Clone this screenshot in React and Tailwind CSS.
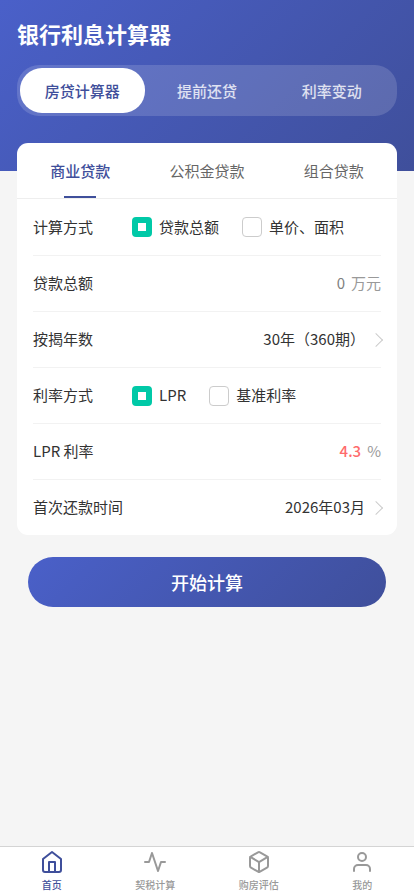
import React, { useState } from "react";
import { FiActivity, FiBox, FiHome, FiUser } from "react-icons/fi";

const modes = ["房贷计算器", "提前还贷", "利率变动"];
const loanTypes = ["商业贷款", "公积金贷款", "组合贷款"];
const months = ["2026年03月", "2026年04月", "2026年05月", "2026年06月"];
const years = [30, 25, 20, 15, 10, 5];

const navItems = [
  { label: "首页", icon: FiHome },
  { label: "契税计算", icon: FiActivity },
  { label: "购房评估", icon: FiBox },
  { label: "我的", icon: FiUser },
];

export default function App() {
  const [mode, setMode] = useState(modes[0]);
  const [loanType, setLoanType] = useState(loanTypes[0]);
  const [method, setMethod] = useState("贷款总额");
  const [rateType, setRateType] = useState("LPR");
  const [amount, setAmount] = useState("");
  const [rate, setRate] = useState("4.3");
  const [term, setTerm] = useState(30);
  const [month, setMonth] = useState(months[0]);

  return (
    <div className="flex min-h-screen flex-col bg-[#f5f5f5] font-['Noto_Sans_CJK_SC',sans-serif] text-[15px] text-[#333]">
      <header className="bg-linear-135 from-[#4a60c9] to-[#3f4f9b] px-[17px] pt-[17px] pb-[55px]">
        <h1 className="mb-4 text-[22px] leading-8 font-semibold text-white">银行利息计算器</h1>
        <div className="flex h-[51px] rounded-[22px] bg-white/15 p-[3px]">
          {modes.map((item) => (
            <button
              key={item}
              type="button"
              onClick={() => setMode(item)}
              className={
                item === mode
                  ? "flex-1 rounded-[22px] bg-white pt-[2px] font-medium text-[#3f4f9b]"
                  : "flex-1 rounded-[22px] pt-[2px] font-medium text-white/80"
              }
            >
              {item}
            </button>
          ))}
        </div>
      </header>

      <main className="-mt-7 flex-1 px-[17px]">
        <div className="rounded-[11px] bg-white">
          <div className="flex h-14 border-b border-[#eee]">
            {loanTypes.map((item) => (
              <button
                key={item}
                type="button"
                onClick={() => setLoanType(item)}
                className={
                  item === loanType
                    ? "relative flex-1 pt-[2px] font-medium text-[#3f4f9b] after:absolute after:bottom-0 after:left-1/2 after:h-[2px] after:w-8 after:-translate-x-1/2 after:bg-[#3f4f9b]"
                    : "flex-1 pt-[2px] text-[#666]"
                }
              >
                {item}
              </button>
            ))}
          </div>

          <div className="mx-4">
            <RadioRow
              label="计算方式"
              name="method"
              options={["贷款总额", "单价、面积"]}
              value={method}
              onChange={setMethod}
            />
            <InputRow
              id="amount"
              label="贷款总额"
              unit="万元"
              placeholder="0"
              value={amount}
              onChange={setAmount}
            />
            <SelectRow id="term" label="按揭年数" value={term} onChange={(v) => setTerm(Number(v))}>
              {years.map((y) => (
                <option key={y} value={y}>
                  {`${y}年（${y * 12}期）`}
                </option>
              ))}
            </SelectRow>
            <RadioRow
              label="利率方式"
              name="rateType"
              options={["LPR", "基准利率"]}
              value={rateType}
              onChange={setRateType}
            />
            <InputRow id="rate" label="LPR 利率" unit="%" value={rate} onChange={setRate} />
            <SelectRow id="month" label="首次还款时间" value={month} onChange={setMonth}>
              {months.map((m) => (
                <option key={m}>{m}</option>
              ))}
            </SelectRow>
          </div>
        </div>

        <div className="px-[11px] py-[22px]">
          <button
            type="button"
            className="h-[50px] w-full rounded-full bg-linear-135 from-[#4a60c9] to-[#3f4f9b] text-[18px] font-medium text-white"
          >
            开始计算
          </button>
        </div>
      </main>

      <nav className="sticky bottom-0 flex h-[50px] border-t border-[#d4d4d4] bg-white">
        {navItems.map(({ label, icon: Icon }, i) => (
          <a
            key={label}
            href="#"
            className={
              i === 0
                ? "flex flex-1 flex-col items-center gap-1 pt-[3px] text-[#3f4f9b]"
                : "flex flex-1 flex-col items-center gap-1 pt-[3px] text-[#999]"
            }
          >
            <Icon size={24} />
            <span className="text-[10px] leading-[14px] font-medium">{label}</span>
          </a>
        ))}
      </nav>
    </div>
  );
}

function RadioRow({ label, name, options, value, onChange }) {
  return (
    <div
      role="radiogroup"
      aria-label={label}
      className="flex h-14 items-center border-t border-[#f2f2f2] first:border-t-0"
    >
      <span className="w-[99px]">{label}</span>
      <div className="flex gap-[23px]">
        {options.map((option) => (
          <label key={option} className="flex items-center gap-[7px]">
            <input
              type="radio"
              name={name}
              checked={option === value}
              onChange={() => onChange(option)}
              className="size-5 appearance-none rounded-[4px] border border-[#ccc] bg-white checked:border-[6px] checked:border-[#00c9a7]"
            />
            {option}
          </label>
        ))}
      </div>
    </div>
  );
}

function InputRow({ id, label, unit, placeholder, value, onChange }) {
  return (
    <div className="flex h-14 items-center border-t border-[#f2f2f2]">
      <label htmlFor={id}>{label}</label>
      <input
        id={id}
        type="text"
        inputMode="decimal"
        placeholder={placeholder}
        value={value}
        onChange={(e) => onChange(e.target.value)}
        className="mr-[6px] min-w-0 flex-1 text-right font-medium text-[#ff6b6b] outline-none placeholder:font-normal placeholder:text-[#808080]"
      />
      <span className="text-[#999]">{unit}</span>
    </div>
  );
}

function SelectRow({ id, label, value, onChange, children }) {
  return (
    <div className="flex h-14 items-center border-t border-[#f2f2f2]">
      <label htmlFor={id}>{label}</label>
      <select
        id={id}
        value={value}
        onChange={(e) => onChange(e.target.value)}
        className="mr-[6px] min-w-0 flex-1 appearance-none [text-align-last:right] outline-none"
      >
        {children}
      </select>
      <span className="size-[10px] rotate-45 border-t border-r border-[#ccc]" />
    </div>
  );
}
